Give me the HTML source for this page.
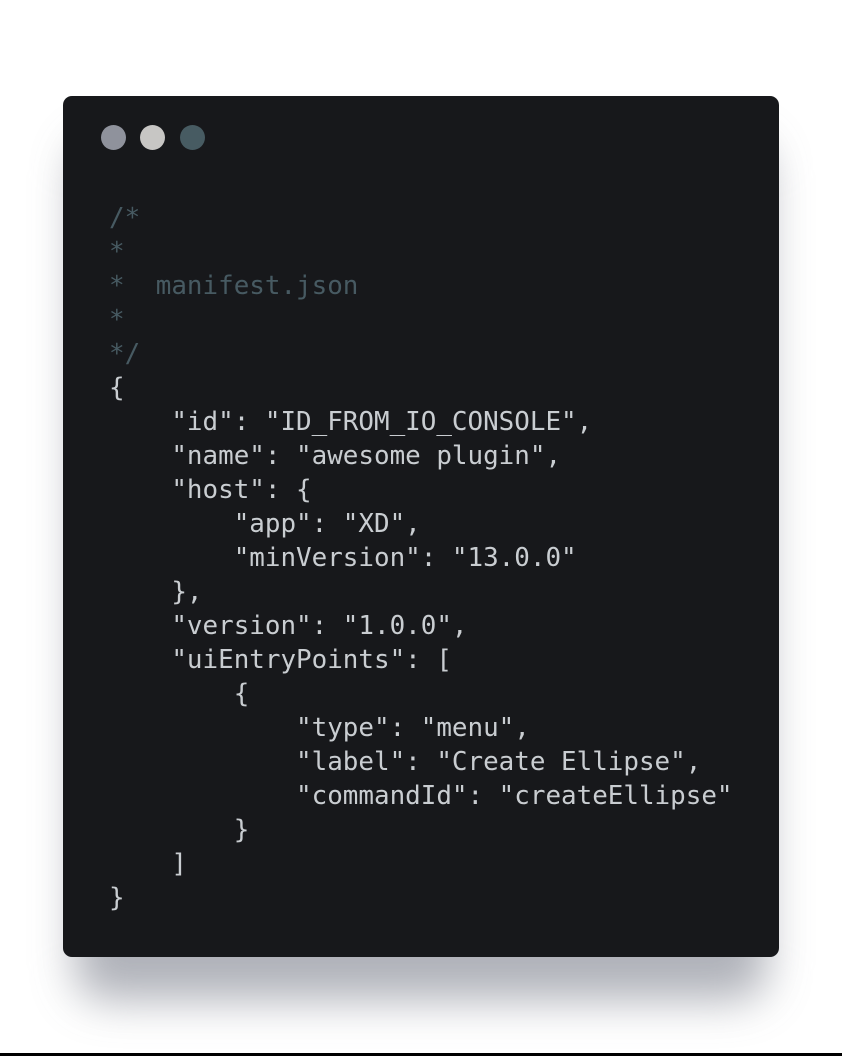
<!DOCTYPE html>
<html><head><meta charset="utf-8"><style>
html,body{margin:0;padding:0;}
body{width:842px;height:1056px;background:#fff;position:relative;overflow:hidden;}
.shadow{position:absolute;left:75px;top:140px;width:692px;height:860px;border-radius:30px;background:#9598a2;filter:blur(22px);opacity:.75;}
.card{position:absolute;left:63px;top:96px;width:716px;height:861px;background:#17181b;border-radius:9px;}
.dot{position:absolute;top:125px;width:25px;height:25px;border-radius:50%;}
pre{position:absolute;left:109px;top:201px;margin:0;font-family:"DejaVu Sans Mono","Liberation Mono",monospace;font-size:25.9px;line-height:34px;color:#c9cdd1;}
.c{color:#475a62;}
.line{position:absolute;left:0;top:1053px;width:842px;height:3px;background:#000;}
</style></head><body>
<div class="shadow"></div>
<div class="card"></div>
<div class="dot" style="left:101px;background:#8f929c"></div>
<div class="dot" style="left:140px;background:#c7c6c4"></div>
<div class="dot" style="left:180px;background:#475b62"></div>
<pre><span class="c">/*
*
*  manifest.json
*
*/</span>
{
    "id": "ID_FROM_IO_CONSOLE",
    "name": "awesome plugin",
    "host": {
        "app": "XD",
        "minVersion": "13.0.0"
    },
    "version": "1.0.0",
    "uiEntryPoints": [
        {
            "type": "menu",
            "label": "Create Ellipse",
            "commandId": "createEllipse"
        }
    ]
}</pre>
<div class="line"></div>
</body></html>
